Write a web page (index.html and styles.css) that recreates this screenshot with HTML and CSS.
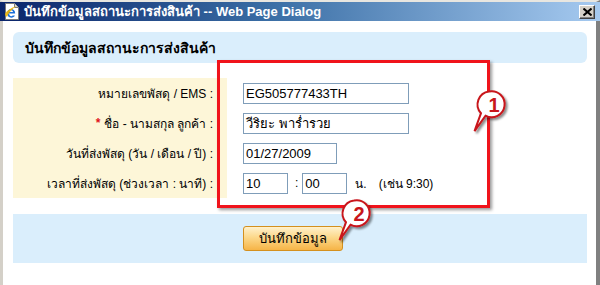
FILE: index.html
```html
<!DOCTYPE html>
<html lang="th">
<head>
<meta charset="utf-8">
<title>Web Page Dialog</title>
<link rel="stylesheet" href="styles.css">
</head>
<body>
<div class="window">
  <div class="titlebar">
    <svg class="ie-icon" width="16" height="17" viewBox="0 0 16 17">
      <path d="M1.5 0.5h9l4 4v12h-13z" fill="#fff" stroke="#7a7a7a"/>
      <path d="M10.5 0.5v4h4" fill="#ddd" stroke="#7a7a7a"/>
      <path d="M3 10.5h8.2c0-3-1.8-4.6-4-4.6c-2.4 0-4.1 1.9-4.1 4.4c0 2.6 1.8 4.4 4.2 4.4c1.7 0 3-0.8 3.6-2.2h-2.2c-0.4 0.5-0.8 0.7-1.4 0.7c-1.2 0-2-0.8-2.1-2.2z M5.2 9.1c0.2-1.1 0.9-1.8 2-1.8s1.7 0.7 1.8 1.8z" fill="#1c6fd8"/>
      <path d="M1 12c0-3 5-7 12-9c-2 1-8 5-10 11z" fill="#f0b400" opacity="0.9"/>
    </svg>
    <span class="title-text">บันทึกข้อมูลสถานะการส่งสินค้า -- Web Page Dialog</span>
    <span class="close-btn">
      <svg width="9" height="8" viewBox="0 0 9 8"><path d="M0.5 0.5l8 7M8.5 0.5l-8 7" stroke="#000" stroke-width="2"/></svg>
    </span>
  </div>
  <div class="content">
    <div class="header-box">บันทึกข้อมูลสถานะการส่งสินค้า</div>
    <div class="form">
      <div class="label">หมายเลขพัสดุ / EMS :</div>
      <div class="field"><span class="input w-long">EG505777433TH</span></div>
      <div class="label"><span class="req">*</span> ชื่อ - นามสกุล ลูกค้า :</div>
      <div class="field"><span class="input w-long">วีริยะ พาร่ำรวย</span></div>
      <div class="label">วันที่ส่งพัสดุ (วัน / เดือน / ปี) :</div>
      <div class="field"><span class="input w-mid">01/27/2009</span></div>
      <div class="label">เวลาที่ส่งพัสดุ (ช่วงเวลา : นาที) :</div>
      <div class="field">
        <span class="input w-short">10</span>
        <span class="sep">:</span>
        <span class="input w-short">00</span>
        <span class="unit">น.</span>
        <span class="hint">(เช่น 9:30)</span>
      </div>
    </div>
    <div class="footer-box">
      <span class="save-btn">บันทึกข้อมูล</span>
    </div>
    <div class="highlight"></div>
    <svg class="callout c1" width="44" height="46" viewBox="0 0 44 46">
      <defs>
        <filter id="sh" x="-30%" y="-30%" width="160%" height="160%">
          <feDropShadow dx="2" dy="2" stdDeviation="1.2" flood-color="#000" flood-opacity="0.45"/>
        </filter>
      </defs>
      <path d="M18 2.5a13 13 0 1 1 -3.5 24.2l-11 15.5l6.5-18a13 13 0 0 1 8-21.7z" fill="#fff" stroke="#c8161b" stroke-width="2" filter="url(#sh)"/>
      <text x="23" y="22.5" class="num">1</text>
    </svg>
    <svg class="callout c2" width="44" height="46" viewBox="0 0 44 46">
      <path d="M18 2.5a13 13 0 1 1 -3.5 24.2l-11 15.5l6.5-18a13 13 0 0 1 8-21.7z" fill="#fff" stroke="#c8161b" stroke-width="2" filter="url(#sh)"/>
      <text x="23" y="22.5" class="num">2</text>
    </svg>
  </div>
</div>
</body>
</html>
```
FILE: styles.css
```css
* { box-sizing: border-box; }
html, body {
  margin: 0;
  padding: 0;
  width: 600px;
  height: 285px;
  overflow: hidden;
  background: #fff;
  font-family: "Liberation Sans", "DejaVu Sans", "Noto Sans", sans-serif;
  font-size: 12px;
  color: #000;
}
.window {
  width: 600px;
  height: 285px;
  display: flex;
  flex-direction: column;
  border-top: 2px solid #e8e6e0;
  border-left: 3px solid #d4d0c8;
  border-right: 4px solid #808080;
  box-shadow: inset 1px 0 0 #fff;
  background: #d4d0c8;
}
.titlebar {
  height: 19px;
  flex: none;
  display: flex;
  align-items: center;
  margin-left: -3px;
  margin-right: -4px;
  padding-left: 4px;
  background: linear-gradient(to right, #0a246a 0%, #3a6ea5 45%, #a6caf0 100%);
  color: #fff;
  font-weight: bold;
  font-size: 13px;
}
.ie-icon { flex: none; margin-right: 4px; }
.title-text { flex: 1; white-space: nowrap; }
.close-btn {
  flex: none;
  width: 16px;
  height: 14px;
  margin-right: 5px;
  background: #d4d0c8;
  border: 1px solid;
  border-color: #fff #404040 #404040 #fff;
  box-shadow: inset -1px -1px 0 #808080;
  display: flex;
  align-items: center;
  justify-content: center;
}
.content {
  position: relative;
  flex: 1;
  background: #fff;
  padding: 11px 9px 0 10px;
}
.header-box {
  height: 31px;
  background: #daeefc;
  border-radius: 6px;
  display: flex;
  align-items: center;
  padding-left: 12px;
  font-weight: bold;
  font-size: 14px;
}
.form {
  margin-top: 15px;
  display: grid;
  grid-template-columns: 214px 1fr;
  grid-auto-rows: 30px;
}
.label {
  background: #fdf6d8;
  display: flex;
  align-items: center;
  justify-content: flex-end;
  padding-right: 14px;
  white-space: nowrap;
}
.req { color: #e0141b; font-weight: bold; margin-right: 4px; }
.field {
  display: flex;
  align-items: center;
  padding-left: 16px;
  white-space: nowrap;
}
.input {
  height: 21px;
  border: 1px solid #7f9db9;
  background: #fff;
  display: flex;
  align-items: center;
  padding-left: 2px;
  font-size: 13px;
}
.w-long { width: 166px; }
.w-mid { width: 94px; }
.w-short { width: 45px; }
.sep { margin: 0 4px 0 7px; }
.unit { margin-left: 8px; }
.hint { margin-left: 12px; font-size: 12px; }
.footer-box {
  margin-top: 16px;
  height: 49px;
  background: #daeefc;
  display: flex;
  align-items: center;
  padding-left: 230px;
}
.save-btn {
  width: 100px;
  height: 25px;
  border: 1px solid #d4901e;
  border-radius: 3px;
  background: linear-gradient(to bottom, #fff1cc 0%, #fcd88a 45%, #f6b447 100%);
  display: flex;
  align-items: center;
  justify-content: center;
  font-size: 13px;
}
.highlight {
  position: absolute;
  left: 214px;
  top: 39px;
  width: 273px;
  height: 148px;
  border: 3px solid #f0131b;
  box-shadow: 2px 2px 3px rgba(0,0,0,0.4);
}
.callout { position: absolute; overflow: visible; }
.c1 { left: 468px; top: 68px; }
.c2 { left: 333px; top: 177px; }
.num {
  font-family: "Liberation Sans", sans-serif;
  font-weight: bold;
  font-size: 20px;
  fill: #c8161b;
  text-anchor: middle;
}
```
